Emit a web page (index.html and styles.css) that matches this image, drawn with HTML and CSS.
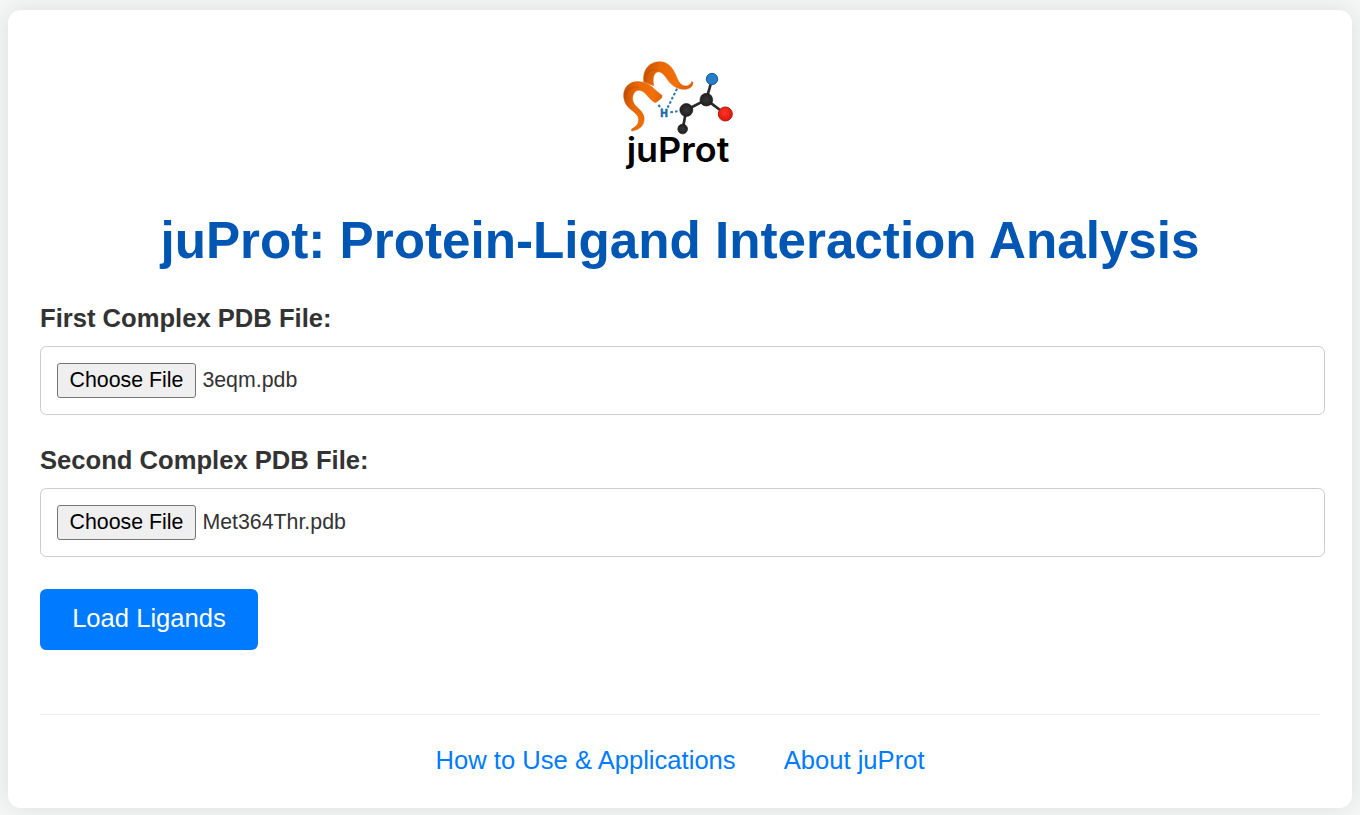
FILE: index.html
```html
<!DOCTYPE html>
<html lang="en">
<head>
<meta charset="utf-8">
<title>juProt: Protein-Ligand Interaction Analysis</title>
<link rel="stylesheet" href="styles.css">
</head>
<body>
<main class="container">
  <svg class="logo" viewBox="0 0 420 390" role="img" aria-label="juProt">
    <defs>
      <linearGradient id="ribbon" x1="0" y1="0.2" x2="1" y2="0.4">
        <stop offset="0" stop-color="#c04e00"/>
        <stop offset="0.3" stop-color="#e96704"/>
        <stop offset="0.75" stop-color="#f37008"/>
        <stop offset="1" stop-color="#dc6003"/>
      </linearGradient>
      <radialGradient id="carbon"><stop offset="0" stop-color="#373737"/><stop offset="1" stop-color="#202020"/></radialGradient>
      <radialGradient id="oxygen" cx="0.45" cy="0.4"><stop offset="0" stop-color="#ff3424"/><stop offset="1" stop-color="#e01c10"/></radialGradient>
    </defs>
    <path class="ribbon" fill="url(#ribbon)" d="M101 95C98 58 117 35 151 35C180 37 192 61 201 84C208 103 221 111 233 107C240 104 244 99 245 95L249 97C249 111 236 119 220 118C200 117 184 105 172 88C161 72 152 63 142 66C131 69 127 85 131 107Z"/>
    <path class="ribbon" fill="url(#ribbon)" d="M65 237C79 230 86 222 86 208C85 183 45 181 41 141C39 112 59 93 88 95C122 97 132 120 156 136L155 144L137 158C118 152 108 124 90 121C73 118 63 139 70 157C76 172 98 180 102 202C105 224 90 240 65 243Z"/>
    <path class="fold" d="M104 88C106 69 120 57 141 59M46 143C46 122 61 109 83 112"/>
    <path class="bond-dash" d="M201 116L169 181M145 165L156 177M181 187L207 183"/>
    <text class="hydrogen" x="150" y="201">H</text>
    <path class="bond" d="M306 88L289 149L346 192M289 149L229 180L218 238"/>
    <circle class="carbon" cx="289" cy="149" r="19"/>
    <circle class="carbon" cx="229" cy="180" r="19.5"/>
    <circle class="carbon" cx="218" cy="237" r="14.5"/>
    <circle class="nitrogen" cx="306" cy="87" r="17"/>
    <circle class="oxygen" cx="346" cy="192" r="21"/>
    <text class="wordmark" x="50" y="337" textLength="308" lengthAdjust="spacingAndGlyphs">juProt</text>
  </svg>
  <h1 class="title">juProt: Protein-Ligand Interaction Analysis</h1>
  <form class="form">
    <div class="field">
      <label class="label">First Complex PDB File:</label>
      <div class="file-input"><button type="button" class="choose">Choose File</button><span class="file-name">3eqm.pdb</span></div>
    </div>
    <div class="field">
      <label class="label">Second Complex PDB File:</label>
      <div class="file-input"><button type="button" class="choose">Choose File</button><span class="file-name">Met364Thr.pdb</span></div>
    </div>
    <button type="button" class="submit">Load Ligands</button>
  </form>
  <footer class="footer">
    <a class="link">How to Use &amp; Applications</a>
    <a class="link">About juProt</a>
  </footer>
</main>
</body>
</html>
```
FILE: styles.css
```css
* { box-sizing: border-box; }
body {
  margin: 0;
  padding: 10px 8px 7px;
  height: 815px;
  overflow: hidden;
  background: #f4f7f6;
  color: #333;
  font-family: "Liberation Sans", Arial, sans-serif;
  font-size: 25.6px;
}
.container {
  height: 798px;
  padding: 40px 32px 0;
  background: #fff;
  border-radius: 12.8px;
  box-shadow: 0 0 24px rgba(0, 0, 0, 0.1);
}
.logo { display: block; width: 140px; height: 130px; margin: 0 auto; }
.ribbon { stroke: #cf5800; stroke-width: 1.5; }
.fold { fill: none; stroke: #b64900; stroke-width: 6; stroke-linecap: round; opacity: 0.3; }
.bond { fill: none; stroke: #2b2b2b; stroke-width: 8; }
.bond-dash { fill: none; stroke: #2f73ad; stroke-width: 6; stroke-dasharray: 8 6; }
.carbon { fill: url(#carbon); stroke: #181818; stroke-width: 2; }
.nitrogen { fill: #267dc8; stroke: #195b9a; stroke-width: 3; }
.oxygen { fill: url(#oxygen); stroke: #b9150d; stroke-width: 3; }
.hydrogen { fill: #2369a7; stroke: #2369a7; stroke-width: 1; font: 700 29px "DejaVu Sans", sans-serif; }
.wordmark { fill: #000; font: 600 102px Inter, "Noto Sans", sans-serif; }
.title {
  margin: 31px 0;
  color: #0056b3;
  font-size: 51.2px;
  line-height: 60px;
  text-align: center;
  white-space: nowrap;
}
.field { margin-bottom: 32px; }
.label { display: block; height: 44px; font-weight: 700; line-height: 33px; }
.file-input {
  display: flex;
  align-items: center;
  width: 1285px;
  height: 69px;
  padding: 0 16px;
  border: 1px solid #ccc;
  border-radius: 6.4px;
  font-size: 21.33px;
}
.field + .field { margin-top: -3px; }
.choose {
  width: 139px;
  height: 35px;
  margin-right: 6.4px;
  padding: 0;
  border: 1px solid #767676;
  border-radius: 3px;
  background: #efefef;
  color: #000;
  font: inherit;
}
.submit {
  display: block;
  width: 218px;
  height: 61px;
  padding: 0 0 2px;
  border: 0;
  border-radius: 6.4px;
  background: #007bff;
  color: #fff;
  font: inherit;
}
.footer {
  display: flex;
  justify-content: center;
  gap: 48px;
  margin-top: 64px;
  padding-top: 30px;
  border-top: 1px solid #eee;
  line-height: 30px;
}
.link { color: #007bff; }
```
